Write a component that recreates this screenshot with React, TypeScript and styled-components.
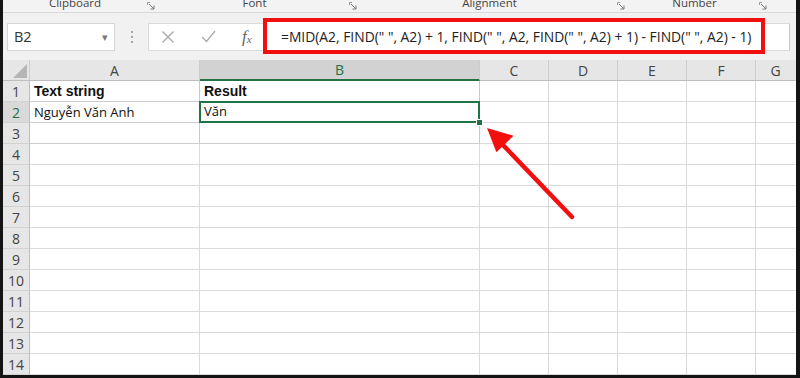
import { FC } from 'react'
import styled, { createGlobalStyle } from 'styled-components'

const GlobalStyle = createGlobalStyle`
  html, body {
    margin: 0;
    padding: 0;
    background: #fff;
  }
  * {
    box-sizing: border-box;
  }
`

const columns = ['A', 'B', 'C', 'D', 'E', 'F', 'G']
const rowCount = 14
const formula = '=MID(A2, FIND(" ", A2) + 1, FIND(" ", A2, FIND(" ", A2) + 1) - FIND(" ", A2) - 1)'

const groups = [
  { label: 'Clipboard', width: 157 },
  { label: 'Font', width: 202 },
  { label: 'Alignment', width: 268 },
  { label: 'Number', width: 142 },
]

const cellText: Record<string, { text: string; bold?: boolean }> = {
  'A1': { text: 'Text string', bold: true },
  'B1': { text: 'Result', bold: true },
  'A2': { text: 'Nguyễn Văn Anh' },
  'B2': { text: 'Văn' },
}

const Launcher: FC = () => (
  <LauncherIcon width="8" height="8" viewBox="0 0 8 8">
    <path d="M0.5 3 V0.5 H3" stroke="#9a9a9a" strokeWidth="1" fill="none" />
    <path d="M2 2 L7 7 M7 3.5 V7 H3.5" stroke="#7a7a7a" strokeWidth="1" fill="none" />
  </LauncherIcon>
)

const ArrowAnnotation: FC = () => (
  <ArrowSvg width="120" height="120" viewBox="0 0 120 120">
    {/* tip at (4,8) local, tail at (89,97) */}
    <line x1="19" x2="89" y1="24" y2="97" stroke="#f40f0f" strokeWidth="4.5" strokeLinecap="round" />
    <polygon points="4,8 30.6,15.7 13.4,32.3" fill="#f40f0f" />
  </ArrowSvg>
)

export default function App() {
  return (
    <>
      <GlobalStyle />
      <Frame>
        <RibbonLabels>
          {groups.map((g) => (
            <Group key={g.label} $width={g.width}>
              <GroupLabel>{g.label}</GroupLabel>
              <Launcher />
            </Group>
          ))}
        </RibbonLabels>

        <FormulaBar>
          <NameBox>
            <span>B2</span>
            <Caret>▾</Caret>
          </NameBox>
          <Grip>
            <i />
            <i />
            <i />
          </Grip>
          <ActionBox>
            <svg width="14" height="14" viewBox="0 0 14 14">
              <path d="M1.5 1.5 L12.5 12.5 M12.5 1.5 L1.5 12.5" stroke="#a8a8a8" strokeWidth="1.3" />
            </svg>
            <svg width="15" height="13" viewBox="0 0 15 13">
              <path d="M1 7 L5.5 11.5 L14 1" stroke="#a8a8a8" strokeWidth="1.3" fill="none" />
            </svg>
            <Fx>
              f<sub>x</sub>
            </Fx>
          </ActionBox>
          <FormulaInput>
            <FormulaText>{formula}</FormulaText>
          </FormulaInput>
          <FormulaTail />
        </FormulaBar>

        <Sheet>
          <Corner>
            <svg width="14" height="14" viewBox="0 0 14 14">
              <polygon points="14,0 14,14 0,14" fill="#b5b5b5" />
            </svg>
          </Corner>
          {columns.map((c) => (
            <ColHeader key={c} $active={c === 'B'} $last={c === 'G'}>
              {c}
            </ColHeader>
          ))}
          {Array.from({ length: rowCount }, (_, i) => i + 1).map((r) => (
            <Row key={r} r={r} />
          ))}
          <ArrowAnnotation />
        </Sheet>
      </Frame>
    </>
  )
}

const Row: FC<{ r: number }> = ({ r }) => (
  <>
    <RowHeader $active={r === 2}>{r}</RowHeader>
    {columns.map((c) => {
      const key = `${c}${r}`
      const data = cellText[key]
      const boxed = r <= 3 && (c === 'A' || c === 'B')
      return (
        <Cell key={key} $boxed={boxed} $bold={data?.bold} $last={c === 'G'} $raised={key === 'B2'}>
          {data?.text}
          {key === 'B2' && (
            <Selection>
              <FillHandle />
            </Selection>
          )}
        </Cell>
      )
    })}
  </>
)

const Frame = styled.div`
  width: 800px;
  height: 378px;
  display: flex;
  flex-direction: column;
  background: #f1f1f1;
  border-left: 3px solid #141414;
  border-right: 4px solid #141414;
  border-bottom: 3px solid #141414;
  overflow: hidden;
  font-family: 'Open Sans', 'Noto Sans', sans-serif;
`

const RibbonLabels = styled.div`
  height: 13px;
  flex: none;
  display: flex;
  background: #f3f3f3;
  border-bottom: 1px solid #d9d9d9;
  overflow: hidden;
`

const Group = styled.div<{ $width: number }>`
  width: ${(p) => p.$width}px;
  display: flex;
  align-items: flex-start;
`

const GroupLabel = styled.div`
  flex: 1;
  text-align: center;
  font-size: 11.5px;
  line-height: 14px;
  margin-top: -4px;
  color: #444;
`

const LauncherIcon = styled.svg`
  margin: 2px 5px 0 0;
  flex: none;
`

const FormulaBar = styled.div`
  height: 47px;
  flex: none;
  display: flex;
  align-items: center;
  padding: 0 0 0 4px;
  background: #f1f1f1;
`

const NameBox = styled.div`
  width: 108px;
  height: 28px;
  display: flex;
  align-items: center;
  justify-content: space-between;
  padding: 0 6px 0 6px;
  background: #fff;
  border: 1px solid #d6d6d6;
  font-size: 14.5px;
  color: #333;
`

const Caret = styled.span`
  font-size: 11px;
  color: #777;
`

const Grip = styled.div`
  width: 33px;
  height: 28px;
  display: flex;
  flex-direction: column;
  align-items: center;
  justify-content: center;
  gap: 3px;

  > i {
    width: 2px;
    height: 2px;
    background: #a5a5a5;
  }
`

const ActionBox = styled.div`
  width: 115px;
  height: 28px;
  display: flex;
  align-items: center;
  gap: 26px;
  padding-left: 12px;
  background: #fff;
  border: 1px solid #dadada;
  border-right: none;
`

const Fx = styled.span`
  font-family: 'Liberation Serif', serif;
  font-style: italic;
  font-size: 17px;
  color: #666;
  line-height: 1;

  > sub {
    font-size: 11px;
    vertical-align: -1px;
  }
`

const FormulaInput = styled.div`
  width: 502px;
  height: 36px;
  display: flex;
  align-items: center;
  padding-left: 14px;
  background: #fff;
  border: 4px solid #f01010;
  margin-top: -1px;
`

const FormulaText = styled.span`
  font-size: 13.85px;
  color: #222;
  white-space: nowrap;
`

const FormulaTail = styled.div`
  width: 25px;
  height: 28px;
  background: #fff;
  border-top: 1px solid #dadada;
  border-bottom: 1px solid #dadada;
  border-right: 1px solid #c8c8c8;
`

const Sheet = styled.div`
  position: relative;
  flex: 1;
  display: grid;
  grid-template-columns: 27px 170px 280px 69px 69px 69px 69px 1fr;
  grid-auto-rows: 21px;
  background: #fff;
  font-size: 13px;
  color: #111;
`

const Corner = styled.div`
  background: #e6e6e6;
  border-right: 1px solid #cfcfcf;
  border-bottom: 1px solid #bdbdbd;
  display: flex;
  align-items: flex-end;
  justify-content: flex-end;
  padding: 0 2px 2px 0;
`

const ColHeader = styled.div<{ $active?: boolean; $last?: boolean }>`
  display: flex;
  align-items: center;
  justify-content: center;
  font-size: 14px;
  background: ${(p) => (p.$active ? '#d2d2d2' : '#e6e6e6')};
  color: ${(p) => (p.$active ? '#217346' : '#444')};
  border-right: 1px solid ${(p) => (p.$last ? 'transparent' : '#cdcdcd')};
  border-bottom: ${(p) => (p.$active ? '2px solid #217346' : '1px solid #bdbdbd')};
`

const RowHeader = styled.div<{ $active?: boolean }>`
  display: flex;
  align-items: center;
  justify-content: center;
  font-size: 14px;
  background: ${(p) => (p.$active ? '#d9d9d9' : '#e6e6e6')};
  color: ${(p) => (p.$active ? '#217346' : '#444')};
  border-right: 1px solid #bdbdbd;
  border-bottom: 1px solid #d2d2d2;
`

const Cell = styled.div<{ $boxed?: boolean; $bold?: boolean; $last?: boolean; $raised?: boolean }>`
  position: relative;
  z-index: ${(p) => (p.$raised ? 2 : 'auto')};
  display: flex;
  align-items: center;
  padding: 0 0 ${(p) => (p.$raised ? '3px' : '0')} 4px;
  white-space: nowrap;
  font-family: ${(p) => (p.$bold ? "'Liberation Sans', Arial, sans-serif" : "'Open Sans', sans-serif")};
  font-size: ${(p) => (p.$bold ? '14px' : '13px')};
  font-weight: ${(p) => (p.$bold ? 700 : 400)};
  border-right: 1px solid ${(p) => (p.$last ? 'transparent' : p.$boxed ? '#c8c8c8' : '#dadada')};
  border-bottom: 1px solid ${(p) => (p.$boxed ? '#cdcdcd' : '#dadada')};
`

const Selection = styled.div`
  position: absolute;
  top: -1px;
  left: -1px;
  right: -1px;
  bottom: -1px;
  border: 2px solid #217346;
  pointer-events: none;
`

const FillHandle = styled.div`
  position: absolute;
  right: -5px;
  bottom: -5px;
  width: 7px;
  height: 7px;
  background: #217346;
  border: 1px solid #fff;
`

const ArrowSvg = styled.svg`
  position: absolute;
  z-index: 3;
  left: 480px;
  top: 60px;
  overflow: visible;
`
